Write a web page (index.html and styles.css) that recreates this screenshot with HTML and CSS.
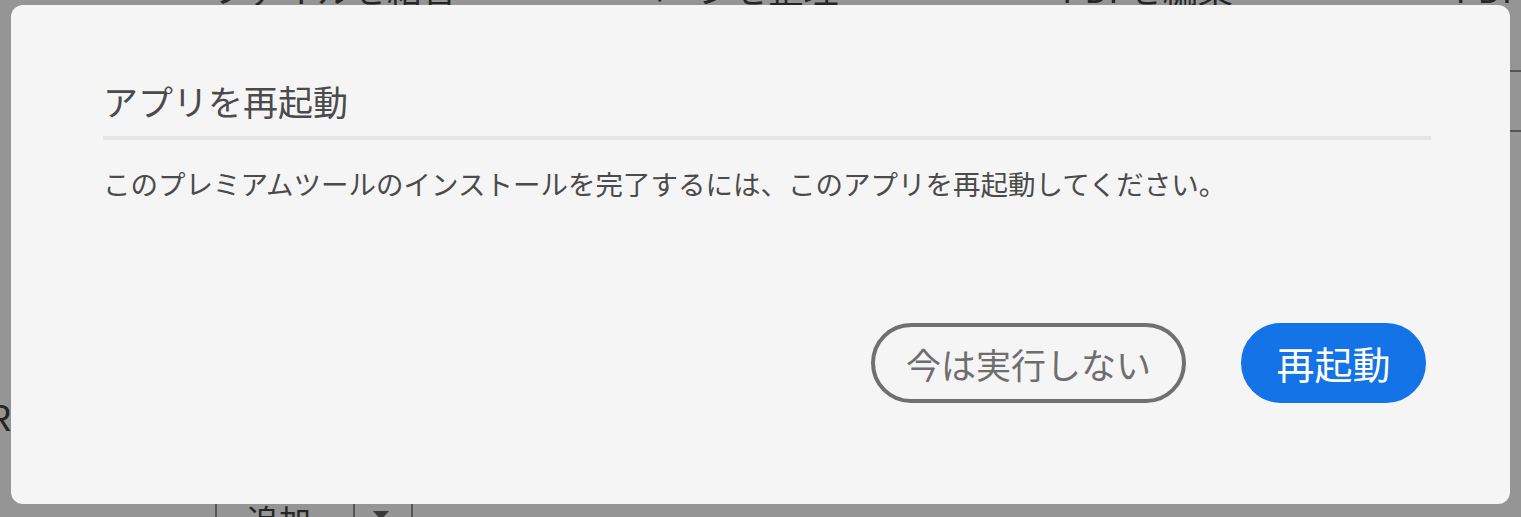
FILE: index.html
```html
<!DOCTYPE html>
<html lang="ja">
<head>
<meta charset="utf-8">
<title>アプリを再起動</title>
<link rel="stylesheet" href="styles.css">
</head>
<body>
<div class="page">
  <div class="backdrop">
    <div class="tools">
      <span class="tool t1">ファイルを結合</span>
      <span class="tool t2">ページを整理</span>
      <span class="tool t3">PDFを編集</span>
      <span class="tool t4">PDF</span>
    </div>
    <div class="side">
      <div class="side-line"></div>
      <div class="side-line"></div>
    </div>
    <div class="left-letter">R</div>
    <div class="add-group">
      <span class="add-label">追加</span>
      <span class="add-arrow"></span>
    </div>
  </div>

  <div class="dialog" role="dialog" aria-labelledby="dlg-title">
    <h2 class="dialog-title" id="dlg-title">アプリを再起動</h2>
    <div class="dialog-divider"></div>
    <p class="dialog-body">このプレミアムツールのインストールを完了するには、このアプリを再起動してください。</p>
    <div class="dialog-footer">
      <button class="btn btn-secondary">今は実行しない</button>
      <button class="btn btn-primary">再起動</button>
    </div>
  </div>
</div>
</body>
</html>
```

FILE: styles.css
```css
* { box-sizing: border-box; }

html, body {
  margin: 0;
  padding: 0;
}

body {
  font-family: "Noto Sans CJK JP", "Noto Sans", sans-serif;
  background: #959595;
}

.page {
  position: relative;
  width: 1521px;
  height: 517px;
  overflow: hidden;
  background: #959595;
}

/* ---------- background (behind the modal) ---------- */
.backdrop {
  height: 100%;
  display: flex;
  flex-direction: column;
  color: #262626;
}

.tools {
  display: flex;
  height: 36px;
  margin-top: -30px;
  font-size: 35px;
  line-height: 36px;
  white-space: nowrap;
}

.tool { display: block; }
.t1 { margin-left: 212px; width: 421px; }
.t2 { width: 437px; }
.t3 { width: 397px; }

.side {
  display: flex;
  flex-direction: column;
  align-self: flex-end;
  width: 12px;
  margin-top: 64px;
}
.side-line {
  height: 60px;
  border-top: 2px solid #555;
}

.left-letter {
  margin-top: 209px;
  margin-left: -14px;
  font-family: "Liberation Sans", sans-serif;
  font-size: 36px;
  line-height: 40px;
  color: #262626;
}

.add-group {
  display: flex;
  margin-top: auto;
  margin-left: 215px;
  height: 28px;
  margin-bottom: -15px;
  width: 198px;
  border-left: 2px solid #555;
  border-right: 2px solid #555;
}
.add-label {
  width: 138px;
  padding-left: 30px;
  font-size: 32px;
  line-height: 30px;
  border-right: 2px solid #555;
  color: #262626;
}
.add-arrow {
  width: 0;
  height: 0;
  margin: 7px 0 0 18px;
  border-left: 8px solid transparent;
  border-right: 8px solid transparent;
  border-top: 9px solid #3a3a3a;
}

/* ---------- modal dialog ---------- */
.dialog {
  position: absolute;
  left: 11px;
  top: 5px;
  width: 1499px;
  height: 499px;
  background: #f5f5f5;
  border-radius: 12px;
  padding: 74px 79px 101px 92px;
  display: flex;
  flex-direction: column;
}

.dialog-title {
  margin: 0;
  font-size: 35px;
  font-weight: 400;
  line-height: 44px;
  color: #4b4b4b;
}

.dialog-divider {
  height: 4px;
  margin-top: 13px;
  background: #e6e6e6;
}

.dialog-body {
  margin: 25px 0 0;
  font-size: 27.5px;
  line-height: 36px;
  color: #4b4b4b;
}

.dialog-footer {
  margin-top: auto;
  display: flex;
  justify-content: flex-end;
  gap: 55px;
  padding-right: 5px;
}

.btn {
  height: 80px;
  border-radius: 40px;
  font-family: inherit;
  line-height: 1;
  padding: 0;
  cursor: pointer;
  display: flex;
  align-items: center;
  justify-content: center;
}

.btn-secondary {
  width: 315px;
  font-size: 35px;
  background: transparent;
  border: 4px solid #707070;
  color: #6e6e6e;
}

.btn-primary {
  width: 185px;
  font-size: 38px;
  background: #1473e6;
  border: 4px solid #1473e6;
  color: #ffffff;
}
```
